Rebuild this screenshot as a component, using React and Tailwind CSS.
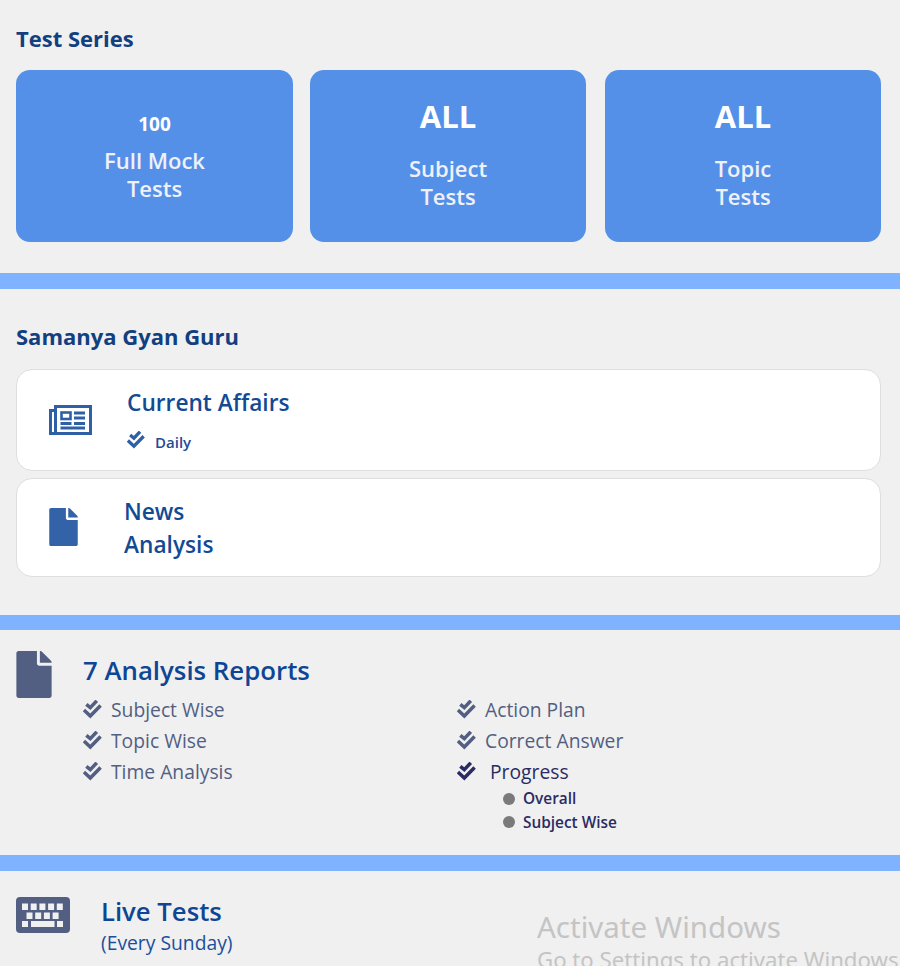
import React from 'react';
import { FaFile } from 'react-icons/fa';

const font = "[font-family:'Open_Sans',sans-serif]";

function DoubleCheck({ className }) {
  return (
    <svg viewBox="0 0 20 20" fill="none" stroke="currentColor" strokeWidth="3.7" className={className}>
      <path d="M3.5 4.5 L7.7 8 L14.5 0.8" />
      <path d="M1 10.5 L7.7 16.8 L18.5 5.8" />
    </svg>
  );
}

function Newspaper({ className }) {
  return (
    <svg viewBox="0 0 43 30" fill="none" stroke="currentColor" className={className}>
      <rect x="6.5" y="1.5" width="35" height="27" strokeWidth="3" />
      <path d="M5 5.5 H1.5 V28.5 H6" strokeWidth="3" />
      <rect x="12.5" y="7.5" width="9" height="6.5" strokeWidth="2.6" />
      <path d="M25 8 H36 M25 13 H36 M25 18.5 H36 M11.5 18.5 H22.5 M11.5 23 H36" strokeWidth="2.8" />
    </svg>
  );
}

function Keyboard({ className }) {
  return (
    <svg viewBox="0 0 54 36" className={className}>
      <rect width="54" height="36" rx="4" fill="#535f82" />
      <g fill="#f0f0f0">
        <rect x="6" y="6.5" width="6" height="6.5" />
        <rect x="14.7" y="6.5" width="6" height="6.5" />
        <rect x="23.4" y="6.5" width="6" height="6.5" />
        <rect x="32.1" y="6.5" width="6" height="6.5" />
        <rect x="40.8" y="6.5" width="6" height="6.5" />
        <rect x="10.5" y="15.5" width="6" height="6.5" />
        <rect x="19.2" y="15.5" width="6" height="6.5" />
        <rect x="27.9" y="15.5" width="6" height="6.5" />
        <rect x="36.6" y="15.5" width="6" height="6.5" />
        <rect x="6" y="24" width="6" height="6" />
        <rect x="15" y="24" width="23.5" height="6" />
        <rect x="41" y="24" width="6" height="6" />
      </g>
    </svg>
  );
}

function SeriesCard({ top, small, lines, className }) {
  return (
    <div className={`h-[172px] rounded-[14px] bg-[#5490e8] flex flex-col items-center text-center ${small ? 'pt-[41px]' : 'pt-[26px]'} ${className}`}>
      <div className={small ? 'text-[19px] font-bold text-white leading-[26px] mb-[9px]' : 'text-[31px] font-bold text-white leading-[40px] mb-[18px]'}>{top}</div>
      {lines.map((l) => (
        <div key={l} className="text-[22px] font-semibold text-[#f0f0f8] leading-[28px]">{l}</div>
      ))}
    </div>
  );
}

function Check({ label, className = '', gap = 'gap-[9px]' }) {
  return (
    <div className={`flex items-center h-[31px] ${gap} ${className}`}>
      <DoubleCheck className="w-[19px] h-[19px] shrink-0 mt-[-1px]" />
      <span className="text-[19.3px] leading-[24px]">{label}</span>
    </div>
  );
}

function Bar() {
  return <div className="h-[15.5px] bg-[#80b3ff]" />;
}

export default function App() {
  return (
    <div className={`relative h-[966px] w-[900px] overflow-hidden bg-[#f0f0f0] ${font}`}>
      {/* Test series */}
      <section className="h-[273px] pl-4 pt-[23px]">
        <h2 className="text-[22px] font-bold text-[#123f80] leading-[30px]">Test Series</h2>
        <div className="mt-[17px] flex">
          <SeriesCard small top="100" lines={['Full Mock', 'Tests']} className="w-[277px] mr-[17px]" />
          <SeriesCard top="ALL" lines={['Subject', 'Tests']} className="w-[276px] mr-[19px]" />
          <SeriesCard top="ALL" lines={['Topic', 'Tests']} className="w-[276px]" />
        </div>
      </section>
      <Bar />

      {/* Samanya Gyan Guru */}
      <section className="h-[326px] px-4 pt-[32px]">
        <h2 className="text-[22px] font-bold text-[#123f80] leading-[30px]">Samanya Gyan Guru</h2>
        <div className="mt-[18px] w-[865px] h-[102px] rounded-[16px] bg-white border-[1.5px] border-[#dedede] flex">
          <Newspaper className="w-[43px] h-[30px] ml-[32px] mt-[35px] text-[#2f5fa5] shrink-0" />
          <div className="ml-[35px] pt-[18px]">
            <div className="text-[22.7px] font-semibold text-[#134a94] leading-[30px]">Current Affairs</div>
            <div className="mt-[14px] flex items-center gap-[10px] text-[#2f5fa5]">
              <DoubleCheck className="w-[18px] h-[18px] mt-[-3px]" />
              <span className="text-[15px] font-semibold text-[#254a96] leading-[20px]">Daily</span>
            </div>
          </div>
        </div>
        <div className="mt-[7px] w-[865px] h-[99px] rounded-[16px] bg-white border-[1.5px] border-[#dedede] flex">
          <FaFile className="w-[29px] h-[38px] ml-[32px] mt-[29px] text-[#3362a8] shrink-0" />
          <div className="ml-[46px] pt-[16px] text-[22.7px] font-semibold text-[#134a94] leading-[33px]">
            <div>News</div>
            <div>Analysis</div>
          </div>
        </div>
      </section>
      <Bar />

      {/* Analysis reports */}
      <section className="h-[225px] pl-4 pt-[21px] flex">
        <FaFile className="w-[36px] h-[47px] text-[#535f82] shrink-0" />
        <div className="ml-[31px] flex-1">
          <h2 className="text-[25.8px] font-semibold text-[#0f4595] leading-[34px] mt-[2px]">7 Analysis Reports</h2>
          <div className="mt-[7px] grid grid-cols-[374px_1fr] text-[#535f82]">
            <div>
              <Check label="Subject Wise" />
              <Check label="Topic Wise" />
              <Check label="Time Analysis" />
            </div>
            <div>
              <Check label="Action Plan" />
              <Check label="Correct Answer" />
              <Check label="Progress" gap="gap-[14px]" className="text-[#2b2b63]" />
              <div className="pl-[46px] text-[15.4px] font-semibold text-[#2b2b63] leading-[23.5px]">
                <div className="flex items-center gap-[8px]"><span className="w-3 h-3 rounded-full bg-[#7a7a7a]" />Overall</div>
                <div className="flex items-center gap-[8px]"><span className="w-3 h-3 rounded-full bg-[#7a7a7a]" />Subject Wise</div>
              </div>
            </div>
          </div>
        </div>
      </section>
      <Bar />

      {/* Live tests */}
      <section className="pl-4 pt-[26px] flex">
        <Keyboard className="w-[54px] h-[36px] shrink-0" />
        <div className="ml-[31px] mt-[-1px]">
          <div className="text-[25.7px] font-semibold text-[#0f4595] leading-[32px]">Live Tests</div>
          <div className="text-[19.3px] text-[#1a4f9c] leading-[24px] mt-[3px]">(Every Sunday)</div>
        </div>
      </section>

      {/* windows watermark */}
      <div className="absolute left-[537px] top-[908px] whitespace-nowrap text-[#c4c4c4] [font-family:'Noto_Sans',sans-serif]">
        <div className="text-[29.5px] leading-[38px]">Activate Windows</div>
        <div className="text-[22.2px] leading-[27px]">Go to Settings to activate Windows.</div>
      </div>
    </div>
  );
}
